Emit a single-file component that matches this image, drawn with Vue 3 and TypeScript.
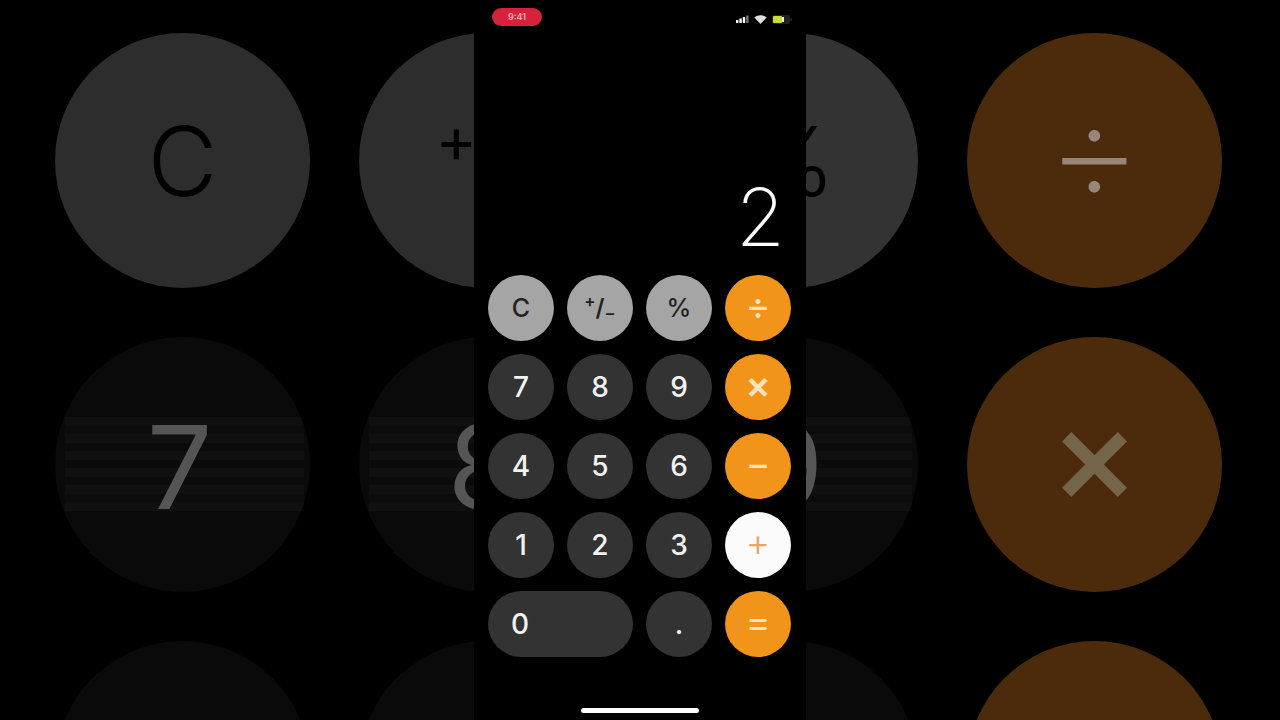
<script setup lang="ts">
interface CalcKey {
  label: string
  kind: 'fn' | 'num' | 'op' | 'active'
  wide?: boolean
}

const keys: CalcKey[] = [
  { label: 'C', kind: 'fn' },
  { label: '+/-', kind: 'fn' },
  { label: '%', kind: 'fn' },
  { label: '÷', kind: 'op' },
  { label: '7', kind: 'num' },
  { label: '8', kind: 'num' },
  { label: '9', kind: 'num' },
  { label: '×', kind: 'op' },
  { label: '4', kind: 'num' },
  { label: '5', kind: 'num' },
  { label: '6', kind: 'num' },
  { label: '−', kind: 'op' },
  { label: '1', kind: 'num' },
  { label: '2', kind: 'num' },
  { label: '3', kind: 'num' },
  { label: '+', kind: 'active' },
  { label: '0', kind: 'num', wide: true },
  { label: '.', kind: 'num' },
  { label: '=', kind: 'op' }
]

// the blown-up copy behind the phone only shows the first three rows
const backdropKeys = keys.slice(0, 12)
</script>

<template>
  <div class="page">
    <div class="backdrop">
      <div
        v-for="(k, i) in backdropKeys"
        :key="k.label"
        class="bg-key"
        :class="['bg-' + k.kind, { striped: i >= 4 && i < 7 }]"
      >
        <span v-if="k.label === '+/-'" class="plus-minus"><sup>+</sup>/<sub>−</sub></span>
        <span v-else-if="i < 8" class="bg-label">{{ k.label }}</span>
      </div>
    </div>

    <div class="phone">
      <div class="status-bar">
        <span class="time-pill">9:41</span>
        <div class="status-icons">
          <svg width="13" height="8" viewBox="0 0 13 8">
            <rect x="0" y="5" width="2.4" height="3" fill="#fff" />
            <rect x="3.4" y="3.5" width="2.4" height="4.5" fill="#fff" />
            <rect x="6.8" y="2" width="2.4" height="6" fill="#fff" />
            <rect x="10.2" y="0.5" width="2.4" height="7.5" fill="#777" />
          </svg>
          <svg width="13" height="9" viewBox="0 0 13 9">
            <path d="M0.3 2.6C3.8-0.6 9.2-0.6 12.7 2.6L6.5 9Z" fill="#ddd" />
          </svg>
          <svg width="20" height="9" viewBox="0 0 20 9">
            <rect x="0" y="0" width="18" height="9" rx="2" fill="#222" />
            <rect x="1" y="1" width="9" height="7" rx="1" fill="#c8dc2c" />
            <rect x="10" y="2" width="2" height="5" fill="#eee" />
            <rect x="18.4" y="3" width="1.2" height="3" fill="#333" />
          </svg>
        </div>
      </div>

      <div class="display">2</div>

      <div class="keypad">
        <button
          v-for="k in keys"
          :key="k.label"
          class="key"
          :class="[k.kind, { wide: k.wide }]"
        >
          <span v-if="k.label === '+/-'" class="plus-minus"><sup>+</sup>/<sub>−</sub></span>
          <template v-else>{{ k.label }}</template>
        </button>
      </div>

      <div class="home-indicator"></div>
    </div>
  </div>
</template>

<style>
html,
body {
  margin: 0;
  background: #000;
}
</style>

<style scoped>
.page {
  position: relative;
  width: 1280px;
  height: 720px;
  overflow: hidden;
  background: #000;
  display: flex;
  justify-content: center;
  font-family: Inter, "Liberation Sans", sans-serif;
}

.backdrop {
  position: absolute;
  left: 55px;
  top: 33px;
  display: grid;
  grid-template-columns: repeat(4, 255px);
  grid-auto-rows: 255px;
  gap: 49px;
}

.bg-key {
  position: relative;
  border-radius: 50%;
  overflow: hidden;
  display: flex;
  align-items: center;
  justify-content: center;
}

.bg-fn {
  background: #2d2d2d;
  color: #000;
  font-size: 96px;
  font-weight: 300;
}

.bg-fn:nth-child(3) {
  background: #333;
}

.bg-num {
  background: #0a0a0a;
  color: #555;
  font-size: 116px;
  font-weight: 400;
}

.bg-num .bg-label {
  margin: 4px 6px 0 0;
}

.bg-op {
  background: #4b2b0c;
  color: #97877a;
  font-size: 150px;
  font-weight: 200;
}

.bg-op .bg-label {
  margin-top: -22px;
}

.bg-op:nth-child(8) {
  color: #75654a;
  font-size: 136px;
  font-weight: 500;
}

.bg-key.striped::before {
  content: "";
  position: absolute;
  left: 10px;
  right: 6px;
  top: 80px;
  height: 96px;
  background: repeating-linear-gradient(to bottom, #101010 0 9px, #0b0b0b 9px 17px);
}

.bg-label {
  position: relative;
}

.bg-fn .plus-minus {
  font-size: 90px;
  font-weight: 400;
  margin-left: 14px;
}

.phone {
  position: relative;
  width: 332px;
  height: 720px;
  background: #000;
  display: flex;
  flex-direction: column;
  box-sizing: border-box;
  padding: 8px 14px 7px;
}

.status-bar {
  display: flex;
  align-items: center;
  justify-content: space-between;
  padding: 0 0 0 4px;
  height: 18px;
}

.time-pill {
  width: 50px;
  height: 18px;
  line-height: 18px;
  border-radius: 9px;
  background: #d6223a;
  color: #f3b0b8;
  font-size: 9px;
  font-weight: 600;
  text-align: center;
}

.status-icons {
  display: flex;
  align-items: center;
  gap: 5px;
  margin-top: 4px;
  filter: blur(0.5px);
}

.display {
  height: 90px;
  margin-top: 141px;
  padding: 0 7px 20px 0;
  display: flex;
  justify-content: flex-end;
  align-items: flex-end;
  color: #fff;
  font-size: 80px;
  font-weight: 200;
  line-height: 1;
}

.keypad {
  display: grid;
  grid-template-columns: repeat(4, 66px);
  grid-auto-rows: 66px;
  gap: 13px;
  margin-top: -2px;
}

.key {
  border: none;
  padding: 0;
  border-radius: 33px;
  display: flex;
  align-items: center;
  justify-content: center;
  font-family: inherit;
  font-size: 28px;
  font-weight: 500;
}

.key.fn {
  background: #a5a5a5;
  color: #222;
  font-size: 25px;
  font-weight: 500;
}

.key.num {
  background: #333;
  color: #f2f2f2;
}

.key.op {
  background: #f2931a;
  color: #fbe3bd;
  font-size: 38px;
  font-weight: 400;
  padding-bottom: 6px;
}

.key.op:nth-child(8) {
  font-weight: 600;
}

.key.active {
  background: #fbfbfb;
  color: #eca264;
  font-size: 38px;
  font-weight: 300;
  padding-bottom: 6px;
}

.key.wide {
  grid-column: span 2;
  justify-content: flex-start;
  padding-left: 23px;
}

.plus-minus {
  font-size: 0.95em;
  line-height: 1;
  font-weight: 600;
}

.plus-minus sup,
.plus-minus sub {
  font-size: 0.7em;
  line-height: 0;
}

.plus-minus sub {
  position: relative;
  top: -0.15em;
}

.home-indicator {
  width: 118px;
  height: 5px;
  margin: auto 0 0 93px;
  border-radius: 3px;
  background: #fff;
}
</style>
